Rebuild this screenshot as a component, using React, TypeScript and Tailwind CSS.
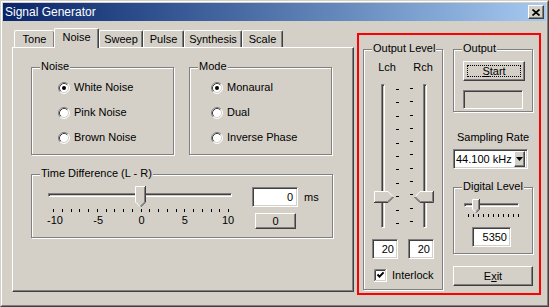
import React from "react";

const RAISED =
  "border border-t-white border-l-white border-r-[#404040] border-b-[#404040] shadow-[inset_-1px_-1px_0_#808080]";
const SUNKEN =
  "border border-t-[#808080] border-l-[#808080] border-r-white border-b-white shadow-[inset_1px_1px_0_#404040,inset_-1px_-1px_0_#d4d0c8]";
const TRACK =
  "border border-t-[#808080] border-l-[#808080] border-r-white border-b-white shadow-[inset_1px_1px_0_#404040]";

function Group({
  label,
  className,
  children,
}: {
  label: string;
  className: string;
  children?: React.ReactNode;
}) {
  return (
    <div
      className={`relative border border-[#808080] shadow-[inset_1px_1px_0_#fff,1px_1px_0_#fff] ${className}`}
    >
      <span className="absolute -top-[8px] left-[8px] px-[1px] bg-[#d4d0c8] leading-[13px] whitespace-nowrap">
        {label}
      </span>
      {children}
    </div>
  );
}

function Radio({ checked }: { checked?: boolean }) {
  return (
    <svg width="12" height="12" viewBox="0 0 12 12" className="shrink-0">
      <circle cx="6" cy="6" r="5" fill="#fff" />
      <path d="M2.11 9.89A5.5 5.5 0 0 1 9.89 2.11" stroke="#808080" fill="none" />
      <path d="M9.89 2.11A5.5 5.5 0 0 1 2.11 9.89" stroke="#fff" fill="none" />
      <path d="M2.82 9.18A4.5 4.5 0 0 1 9.18 2.82" stroke="#404040" fill="none" />
      <path d="M9.18 2.82A4.5 4.5 0 0 1 2.82 9.18" stroke="#d4d0c8" fill="none" />
      {checked && <circle cx="6" cy="6" r="2" fill="#000" />}
    </svg>
  );
}

function RadioRow({ checked, label, className }: { checked?: boolean; label: string; className?: string }) {
  return (
    <div className={`flex items-center h-[13px] ${className ?? ""}`}>
      <Radio checked={checked} />
      <span className="ml-[4px] whitespace-nowrap">{label}</span>
    </div>
  );
}

function DownThumb() {
  return (
    <svg width="11" height="21" viewBox="0 0 11 21">
      <path d="M0 0H11V16L5.5 21.5L0 16Z" fill="#d4d0c8" />
      <path d="M0.5 16V0.5H10" stroke="#fff" fill="none" />
      <path d="M10.5 0V16.2L5.5 21" stroke="#404040" fill="none" />
      <path d="M9.5 1V16L5.5 20" stroke="#808080" fill="none" />
      <path d="M0.5 16L5 20.5" stroke="#fff" fill="none" />
    </svg>
  );
}

function SmallDownThumb() {
  return (
    <svg width="8" height="14" viewBox="0 0 8 14">
      <path d="M0 0H8V10L4 14L0 10Z" fill="#d4d0c8" />
      <path d="M0.5 10V0.5H7" stroke="#fff" fill="none" />
      <path d="M7.5 0V10.2L4 13.7" stroke="#404040" fill="none" />
      <path d="M6.5 1V10L4 12.5" stroke="#808080" fill="none" />
      <path d="M0.5 10L3.7 13.2" stroke="#fff" fill="none" />
    </svg>
  );
}

function RightThumb() {
  return (
    <svg width="20" height="12" viewBox="0 0 20 12">
      <path d="M0 0H14L19.5 6L14 12H0Z" fill="#d4d0c8" />
      <path d="M0.5 11V0.5H14L19 5.5" stroke="#fff" fill="none" />
      <path d="M0 11.5H14L19.5 6" stroke="#404040" fill="none" />
      <path d="M1 10.5H13.6L18.5 6" stroke="#808080" fill="none" />
    </svg>
  );
}

function LeftThumb() {
  return (
    <svg width="20" height="12" viewBox="0 0 20 12">
      <path d="M6 0H20V12H6L0.5 6Z" fill="#d4d0c8" />
      <path d="M1 6L6 0.5H19.5" stroke="#fff" fill="none" />
      <path d="M19.5 0V11.5H6L0.5 6" stroke="#404040" fill="none" />
      <path d="M18.5 1V10.5H6.4L1.5 6" stroke="#808080" fill="none" />
    </svg>
  );
}

function CheckBox() {
  return (
    <svg width="13" height="13" viewBox="0 0 13 13" className="shrink-0">
      <rect width="13" height="13" fill="#fff" />
      <path d="M0.5 12V0.5H12" stroke="#808080" fill="none" />
      <path d="M1.5 11V1.5H11" stroke="#404040" fill="none" />
      <path d="M12.5 0V12.5H0" stroke="#fff" fill="none" />
      <path d="M11.5 1V11.5H1" stroke="#d4d0c8" fill="none" />
      <path d="M3.5 5.5L5.5 7.6L9.6 3.4" stroke="#000" strokeWidth="2" fill="none" />
    </svg>
  );
}

const tabs = [
  { label: "Tone", cls: "w-[40px] h-[17px] border-r-0" },
  { label: "Noise", cls: "w-[45px] h-[20px] -mb-[1px] relative z-10 bg-[#d4d0c8] pb-[3px]", sel: true },
  { label: "Sweep", cls: "w-[44px] h-[17px]" },
  { label: "Pulse", cls: "w-[41px] h-[17px]" },
  { label: "Synthesis", cls: "w-[58px] h-[17px]" },
  { label: "Scale", cls: "w-[41px] h-[17px]" },
];

function Dashes({ count, className }: { count: number; className: string }) {
  return (
    <div className={`flex flex-col justify-between ${className}`}>
      {Array.from({ length: count }).map((_, i) => (
        <div key={i} className="w-[3px] h-[1px] bg-black" />
      ))}
    </div>
  );
}

export default function App() {
  return (
    <div className="w-[549px] h-[307px] bg-[#d4d0c8] border border-t-[#d4d0c8] border-l-[#d4d0c8] border-r-[#404040] border-b-[#404040] font-['Liberation_Sans',Arial,sans-serif] text-[11px] leading-[13px] text-black select-none overflow-hidden">
      <div className="h-full border border-t-white border-l-white border-r-[#808080] border-b-[#808080] p-[1px] flex flex-col">
        {/* Title bar */}
        <div className="h-[18px] shrink-0 bg-linear-to-r from-[#0a246a] to-[#a6caf0] flex items-center justify-between pl-[2px] pr-[2px]">
          <span className="text-white text-[12px] leading-[14px] whitespace-nowrap">Signal Generator</span>
          <div className={`w-[16px] h-[14px] bg-[#d4d0c8] ${RAISED} flex items-center justify-center`}>
            <svg width="8" height="7" viewBox="0 0 8 7">
              <path d="M0.5 0.5L7.5 6.5M7.5 0.5L0.5 6.5" stroke="#000" strokeWidth="1.7" fill="none" />
            </svg>
          </div>
        </div>

        {/* Body */}
        <div className="flex">
          {/* Left: tabs */}
          <div className="pl-[9px]">
            <div className="mt-[7px] h-[19px] flex items-end pl-[2px]">
              {tabs.map((t) => (
                <div
                  key={t.label}
                  className={`${t.cls} border-t border-l border-t-white border-l-white border-r border-r-[#404040] shadow-[inset_-1px_0_0_#808080] rounded-tl-[2px] rounded-tr-[2px] flex items-center justify-center whitespace-nowrap`}
                >
                  {t.label}
                </div>
              ))}
            </div>
            <div className="w-[342px] h-[245px] border border-t-white border-l-white border-r-[#404040] border-b-[#404040] shadow-[inset_-1px_-1px_0_#808080] pl-[18px] pt-[19px]">
              <div className="flex">
                <Group label="Noise" className="w-[143px] h-[88px]">
                  <div className="pl-[26px] pt-[13px] flex flex-col gap-[12px]">
                    <RadioRow checked label="White Noise" />
                    <RadioRow label="Pink Noise" />
                    <RadioRow label="Brown Noise" />
                  </div>
                </Group>
                <Group label="Mode" className="ml-[15px] w-[143px] h-[88px]">
                  <div className="pl-[21px] pt-[13px] flex flex-col gap-[12px]">
                    <RadioRow checked label="Monaural" />
                    <RadioRow label="Dual" />
                    <RadioRow label="Inverse Phase" />
                  </div>
                </Group>
              </div>
              <Group label="Time Difference (L - R)" className="mt-[19px] w-[302px] h-[64px]">
                <div className="flex">
                  <div className="ml-[16px] mt-[11px] w-[184px]">
                    <div className="relative h-[21px]">
                      <div className={`absolute left-0 right-0 top-[7px] h-[4px] ${TRACK}`} />
                      <div className="absolute left-[87px] top-0">
                        <DownThumb />
                      </div>
                    </div>
                    <div className="mt-[2px] h-[3px] flex justify-between pl-[5px] pr-[3px]">
                      {Array.from({ length: 21 }).map((_, i) => (
                        <div key={i} className="w-[1px] h-[3px] bg-black" />
                      ))}
                    </div>
                    <div className="mt-[2px] -ml-[3px] w-[193px] flex justify-between">
                      {["-10", "-5", "0", "5", "10"].map((l) => (
                        <span key={l} className="w-[20px] text-center">
                          {l}
                        </span>
                      ))}
                    </div>
                  </div>
                  <div className="ml-[20px] mt-[12px]">
                    <div className="flex items-center">
                      <div className={`w-[46px] h-[20px] bg-white ${SUNKEN} flex items-center justify-end pr-[4px]`}>0</div>
                      <span className="ml-[6px]">ms</span>
                    </div>
                    <div className={`ml-[3px] mt-[6px] w-[41px] h-[16px] ${RAISED} flex items-center justify-center`}>0</div>
                  </div>
                </div>
              </Group>
            </div>
          </div>

          {/* Right: red box */}
          <div className="ml-[3px] mt-[12px] w-[184px] h-[262px] border-2 border-[#ff0000] flex pl-[4px] pt-[14px]">
            <Group label="Output Level" className="w-[80px] h-[241px]">
              <div className="flex pt-[11px]">
                <span className="ml-[11px] w-[24px] text-center">Lch</span>
                <span className="ml-[12px] w-[24px] text-center">Rch</span>
              </div>
              <div className="flex mt-[10px] h-[144px]">
                <div className="ml-[10px] w-[20px] h-full relative">
                  <div className={`absolute left-[7px] top-0 bottom-0 w-[4px] ${TRACK}`} />
                  <div className="absolute left-0 top-[107px]">
                    <RightThumb />
                  </div>
                </div>
                <div className="ml-[2px] pt-[5px]">
                  <Dashes count={11} className="h-[135px]" />
                </div>
                <div className="ml-[11px] pt-[4px]">
                  <Dashes count={11} className="h-[134px]" />
                </div>
                <div className="ml-[1px] w-[20px] h-full relative">
                  <div className={`absolute left-[9px] top-0 bottom-0 w-[4px] ${TRACK}`} />
                  <div className="absolute left-0 top-[107px]">
                    <LeftThumb />
                  </div>
                </div>
              </div>
              <div className="flex mt-[11px]">
                <div className={`ml-[8px] w-[26px] h-[20px] bg-white ${SUNKEN} flex items-center justify-end pr-[3px]`}>20</div>
                <div className={`ml-[10px] w-[26px] h-[20px] bg-white ${SUNKEN} flex items-center justify-end pr-[3px]`}>20</div>
              </div>
              <div className="flex items-center mt-[10px]">
                <div className="ml-[10px] flex">
                  <CheckBox />
                </div>
                <span className="ml-[5px]">Interlock</span>
              </div>
            </Group>

            <div className="ml-[10px] w-[80px]">
              <Group label="Output" className="w-[80px] h-[63px]">
                <div className={`relative ml-[9px] mt-[11px] w-[62px] h-[20px] ${RAISED} flex items-center justify-center`}>
                  <div className="absolute inset-[3px] border border-dotted border-black" />
                  <span>
                    <span className="underline">S</span>tart
                  </span>
                </div>
                <div className={`ml-[9px] mt-[9px] w-[60px] h-[19px] ${SUNKEN}`} />
              </Group>
              <div className="mt-[19px] pl-[4px] whitespace-nowrap">Sampling Rate</div>
              <div className={`mt-[5px] w-[75px] h-[20px] bg-white ${SUNKEN} flex items-center justify-between pl-[2px] pr-[2px]`}>
                <span className="whitespace-nowrap">44.100 kHz</span>
                <div className={`w-[11px] h-[16px] bg-[#d4d0c8] ${RAISED} flex items-center justify-center`}>
                  <svg width="7" height="4" viewBox="0 0 7 4">
                    <path d="M0 0H7L3.5 4Z" fill="#000" />
                  </svg>
                </div>
              </div>
              <Group label="Digital Level" className="mt-[18px] w-[80px] h-[67px]">
                <div className="relative ml-[10px] mt-[11px] w-[55px] h-[14px]">
                  <div className={`absolute left-0 right-0 top-[4px] h-[4px] ${TRACK}`} />
                  <div className="absolute left-[8px] top-0">
                    <SmallDownThumb />
                  </div>
                </div>
                <div className="ml-[14px] mt-[1px] w-[51px] h-[3px] flex justify-between">
                  {Array.from({ length: 11 }).map((_, i) => (
                    <div key={i} className="w-[1px] h-[3px] bg-black" />
                  ))}
                </div>
                <div className={`ml-[18px] mt-[10px] w-[39px] h-[20px] bg-white ${SUNKEN} flex items-center justify-end pr-[3px]`}>5350</div>
              </Group>
              <div className={`mt-[12px] w-[80px] h-[20px] ${RAISED} flex items-center justify-center`}>
                <span>
                  E<span className="underline">x</span>it
                </span>
              </div>
            </div>
          </div>
        </div>
      </div>
    </div>
  );
}
